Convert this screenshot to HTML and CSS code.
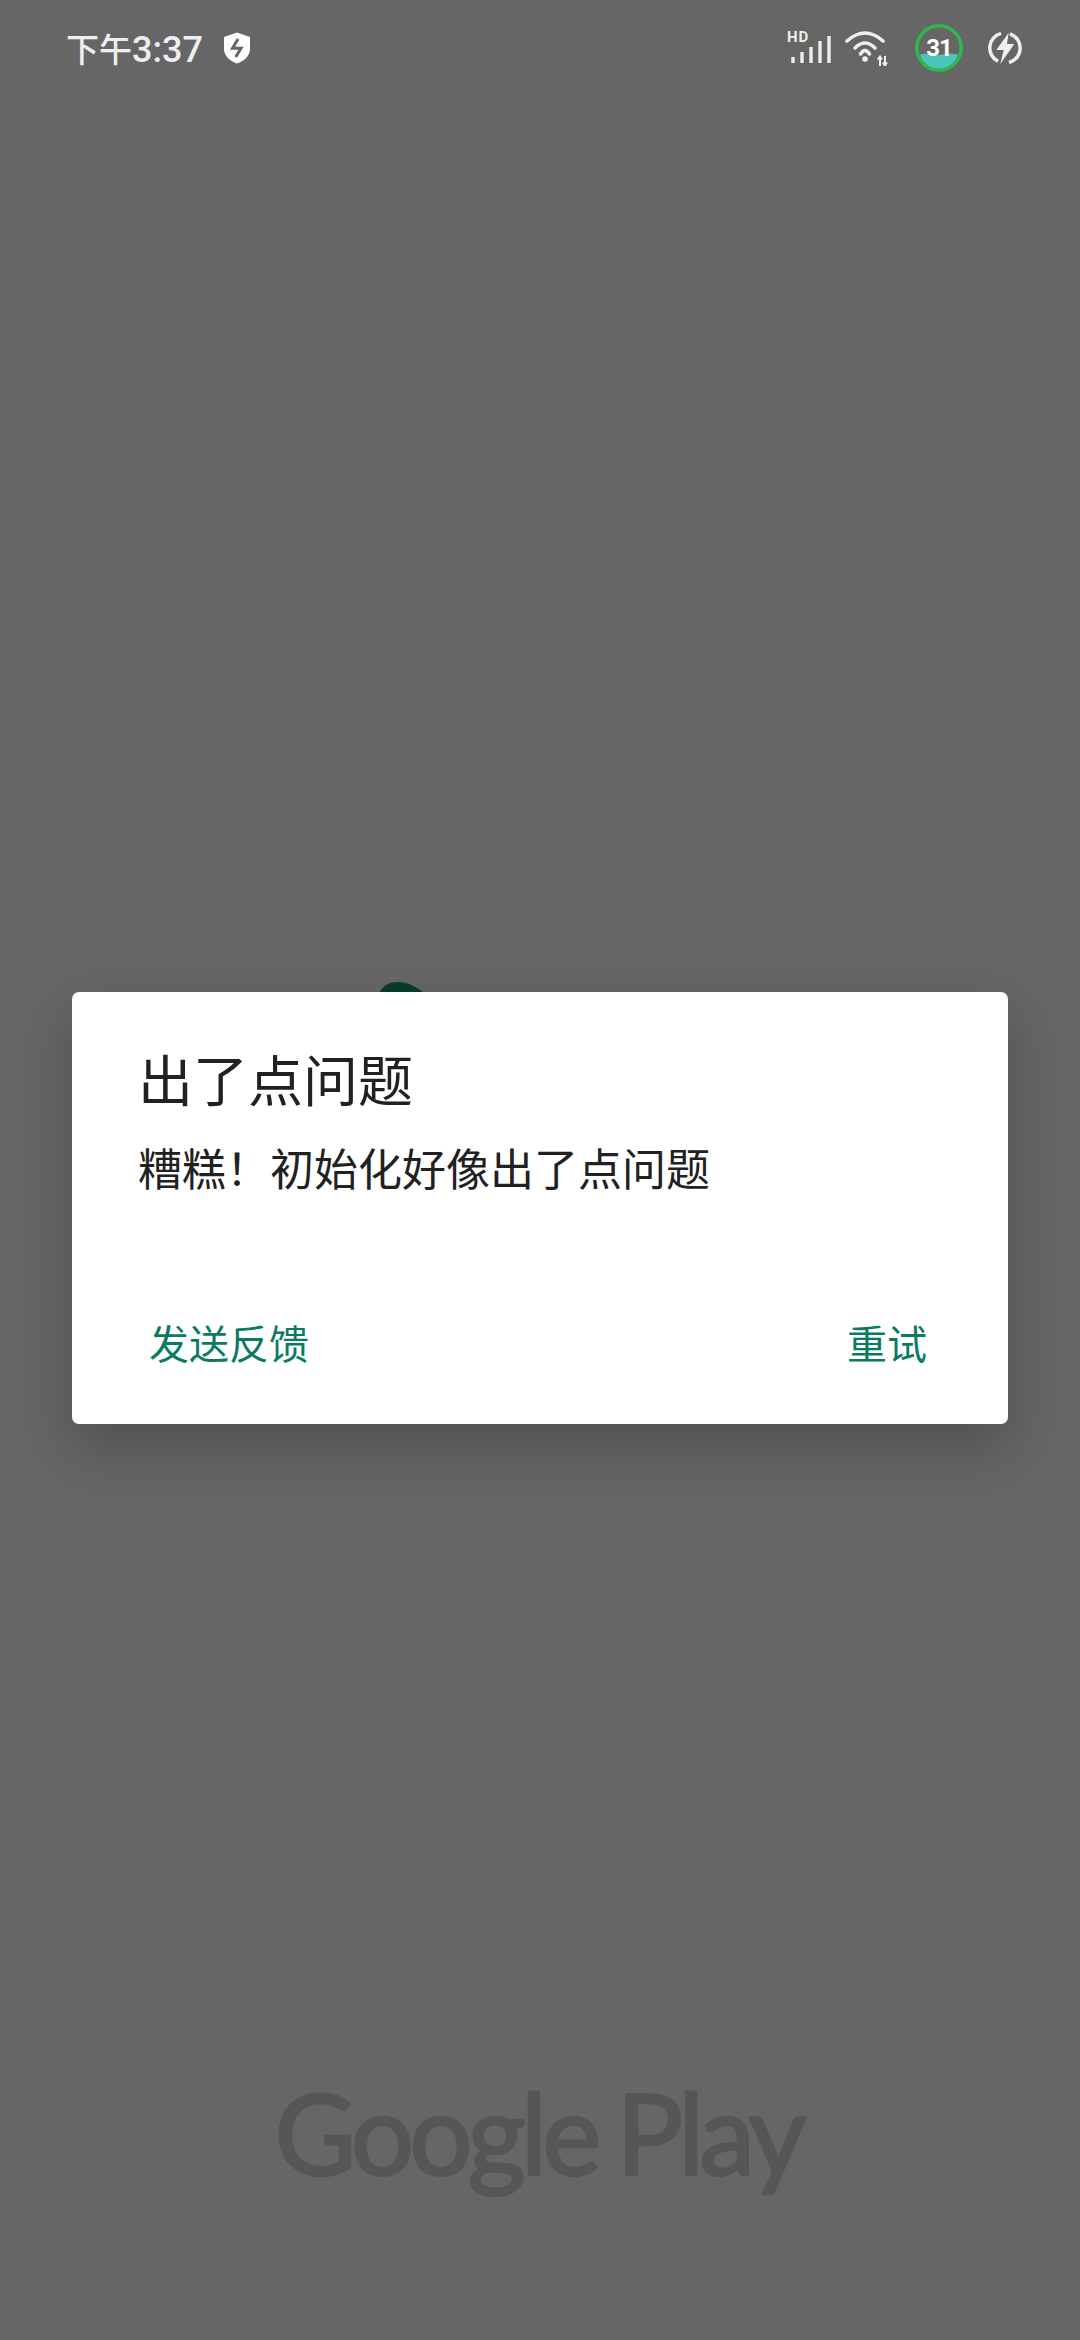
FILE: index.html
```html
<!DOCTYPE html>
<html lang="zh-CN">
<head>
    <meta charset="UTF-8">
    <meta name="viewport" content="width=device-width, initial-scale=1.0">
    <title>Google Play</title>
    <link rel="stylesheet" href="styles.css">
</head>
<body>
    <div class="screen">
        <div class="status-bar">
            <div class="status-left">
                <span class="clock"><span class="clock-period">下午</span>3:37</span>
                <svg class="icon-shield" width="28" height="32" viewBox="0 0 28 32">
                    <path d="M14 0.5 L27 5 V17 C27 24 21 29 14 31.5 C7 29 1 24 1 17 V5 Z" fill="#fff"/>
                    <path d="M15 7 L9.5 16.3 H18 L12.7 25" stroke="#666" stroke-width="3" fill="none"/>
                </svg>
            </div>
            <div class="status-right">
                <div class="signal">
                    <span class="signal-hd">HD</span>
                    <svg width="44" height="32" viewBox="0 0 44 32">
                        <g stroke="#eee" stroke-width="3.4" fill="none">
                            <path d="M6 25 V31"/>
                            <path d="M15 20 V31"/>
                            <path d="M24 15 V31"/>
                            <path d="M33 9 V31"/>
                            <path d="M42 4 V31"/>
                        </g>
                    </svg>
                </div>
                <svg class="icon-wifi" width="44" height="36" viewBox="0 0 44 36">
                    <g stroke="#eee" stroke-width="3.5" fill="none" stroke-linecap="round">
                        <path d="M3 11 Q21 -5 39 11"/>
                        <path d="M11 18 Q21 8 31 18"/>
                        <path d="M16.5 24 Q21 17 25.5 24"/>
                    </g>
                    <circle cx="21" cy="29" r="2.8" fill="#eee"/>
                    <path d="M36 27 V36 M33.8 29.5 L36 26.5 L38 29.5 M41 26 V35 M38.8 32.5 L41 35.5 L43 32.5" stroke="#eee" stroke-width="2" fill="none"/>
                </svg>
                <div class="battery">
                    <svg width="48" height="48" viewBox="0 0 48 48">
                        <path d="M5 31 C12 28 16 32 24 31 C32 30 36 29 43 31 C40 40 33 45 24 45 C15 45 8 40 5 31 Z" fill="#4cc4bc"/>
                        <circle cx="24" cy="24" r="22.2" stroke="#30b64a" stroke-width="3.4" fill="none"/>
                    </svg>
                    <span class="battery-level">31</span>
                </div>
                <svg class="icon-charge" width="36" height="36" viewBox="0 0 36 36">
                    <path d="M14 3.4 A15 15 0 0 0 11 31.3 M23 3.8 A15 15 0 0 1 22 32.5" stroke="#eee" stroke-width="3.5" fill="none"/>
                    <path d="M21.7 2.7 L9.3 20 H16.7 L13.3 34 L27.3 14 H20 Z" fill="#eee"/>
                </svg>
            </div>
        </div>

        <div class="dialog-area">
            <svg class="splash-peek" width="44" height="10" viewBox="0 0 44 10">
                <path d="M0 10 C3 3 10 0 18 0 C28 0 36 5 43 10 Z" fill="#0a3d28"/>
            </svg>
            <div class="dialog">
                <h1 class="dialog-title">出了点问题</h1>
                <p class="dialog-message">糟糕！初始化好像出了点问题</p>
                <div class="dialog-actions">
                    <span class="dialog-button">发送反馈</span>
                    <span class="dialog-button">重试</span>
                </div>
            </div>
        </div>

        <div class="brand">Google Play</div>
    </div>
</body>
</html>
```

FILE: styles.css
```css
html, body {
    margin: 0;
    padding: 0;
}

body {
    font-family: Roboto, "Noto Sans CJK SC", sans-serif;
    background-color: #666666;
}

.screen {
    width: 1080px;
    height: 2340px;
    display: flex;
    flex-direction: column;
    background-color: #666666;
    overflow: hidden;
}

.status-bar {
    height: 96px;
    padding: 0 57px 0 66px;
    display: flex;
    justify-content: space-between;
    align-items: center;
    box-sizing: border-box;
    color: #eeeeee;
}

.status-left {
    display: flex;
    align-items: center;
    gap: 20px;
}

.clock {
    font-size: 36px;
    font-weight: 500;
}

.clock-period {
    font-size: 33px;
}

.status-right {
    display: flex;
    align-items: center;
}

.signal {
    position: relative;
    width: 44px;
    height: 32px;
}

.signal svg {
    display: block;
}

.signal-hd {
    position: absolute;
    top: -2px;
    left: 0;
    font-size: 15px;
    font-weight: 700;
    letter-spacing: 1px;
    line-height: 14px;
}

.icon-wifi {
    margin-left: 13px;
}

.battery {
    position: relative;
    width: 48px;
    height: 48px;
    margin-left: 27px;
}

.battery svg {
    display: block;
}

.battery-level {
    position: absolute;
    inset: 0;
    text-align: center;
    font-size: 24px;
    font-weight: 700;
    line-height: 49px;
    letter-spacing: -1px;
    color: #ffffff;
}

.icon-charge {
    margin-left: 24px;
}

.dialog-area {
    position: relative;
    margin: 896px 72px 0;
}

.splash-peek {
    position: absolute;
    top: -10px;
    left: 308px;
}

.dialog {
    position: relative;
    height: 432px;
    background-color: #ffffff;
    border-radius: 7px;
    box-shadow: 0 24px 60px rgba(0, 0, 0, 0.22);
    box-sizing: border-box;
    padding: 54px 66px 0;
    display: flex;
    flex-direction: column;
}

.dialog-title {
    margin: 0;
    font-size: 55px;
    font-weight: 400;
    line-height: 72px;
    color: #212121;
}

.dialog-message {
    margin: 23px 0 0;
    font-size: 44px;
    line-height: 60px;
    color: #212121;
}

.dialog-actions {
    display: flex;
    justify-content: space-between;
    margin: auto 15px 50px 11px;
}

.dialog-button {
    font-size: 40px;
    line-height: 56px;
    color: #0b7a62;
}

.brand {
    margin-top: auto;
    margin-bottom: 143px;
    padding-right: 4px;
    text-align: center;
    font-family: Lato, sans-serif;
    font-size: 112px;
    font-weight: 400;
    line-height: 130px;
    letter-spacing: -5px;
    word-spacing: -4px;
    -webkit-text-stroke: 2.5px #565656;
    color: #565656;
}
```
